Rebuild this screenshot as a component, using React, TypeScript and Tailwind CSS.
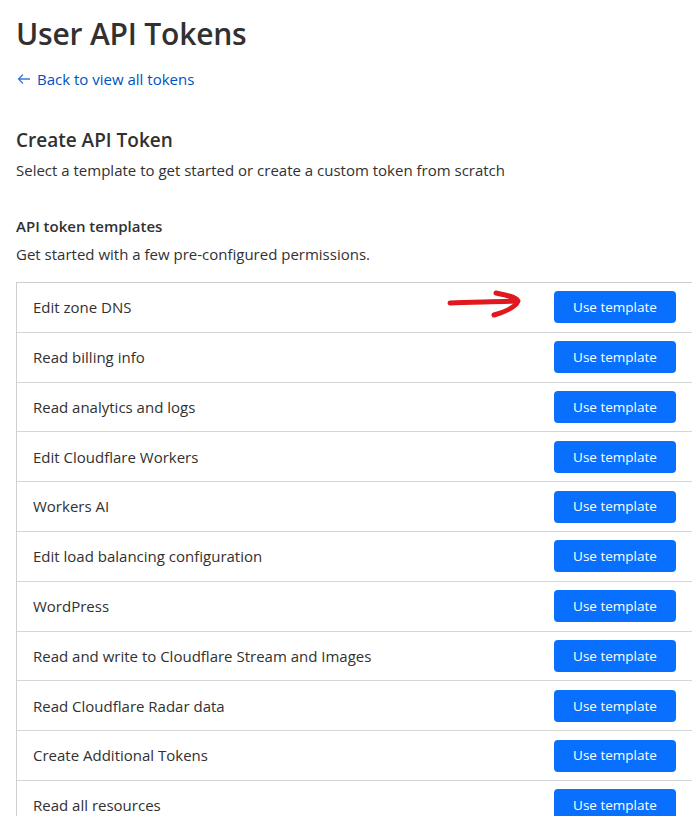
import React from 'react'

const templates = [
  'Edit zone DNS',
  'Read billing info',
  'Read analytics and logs',
  'Edit Cloudflare Workers',
  'Workers AI',
  'Edit load balancing configuration',
  'WordPress',
  'Read and write to Cloudflare Stream and Images',
  'Read Cloudflare Radar data',
  'Create Additional Tokens',
  'Read all resources',
]

export default function App() {
  return (
    <div
      className="relative w-[692px] h-[816px] overflow-hidden bg-white text-[#313131]"
      style={{ fontFamily: '"Open Sans", "Noto Sans", sans-serif' }}
    >
      <div className="pl-4 pt-[14px]">
        {/* タイトル */}
        <h1 className="text-[30px] leading-[40px] font-semibold tracking-[-0.2px]">User API Tokens</h1>

        <a className="mt-[14px] flex items-center gap-[6px] text-[15px] text-[#0051c3]" href="#">
          <svg width="14" height="12" viewBox="0 0 14 12" className="ml-[1px]">
            <path d="M13 6H1.5M6 1.5L1.5 6L6 10.5" stroke="#3a78d8" strokeWidth="1.3" fill="none" />
          </svg>
          Back to view all tokens
        </a>

        <h2 className="mt-[36px] text-[19px] leading-[26px] font-semibold">Create API Token</h2>
        <p className="mt-[6px] text-[15px]">Select a template to get started or create a custom token from scratch</p>

        <h3 className="mt-[34px] text-[15px] font-semibold">API token templates</h3>
        <p className="mt-[5px] text-[15px]">Get started with a few pre-configured permissions.</p>

        {/* テンプレート一覧 */}
        <div className="mt-[17px] w-[720px] border border-[#cfcfcf] border-b-0">
          {templates.map((t) => (
            <div
              key={t}
              className="flex h-[49.8px] items-center justify-between border-b border-[#d6d6d6] pl-4 pr-[59px]"
            >
              <span className="text-[15px]">{t}</span>
              <button className="h-[32px] w-[122px] rounded-[4px] bg-[#086fff] text-[13.5px] text-white">
                Use template
              </button>
            </div>
          ))}
        </div>
      </div>

      {/* 赤い矢印 */}
      <svg className="absolute left-[444px] top-[288px]" width="84" height="34" viewBox="0 0 84 34">
        <path
          d="M6 15 C 26 14, 46 14, 72 13"
          stroke="#e0191f"
          strokeWidth="5"
          strokeLinecap="round"
          fill="none"
        />
        <path
          d="M52 5 C 62 7, 72 9, 74 13 C 72 19, 60 24, 50 27"
          stroke="#e0191f"
          strokeWidth="5"
          strokeLinecap="round"
          strokeLinejoin="round"
          fill="none"
        />
      </svg>
    </div>
  )
}
